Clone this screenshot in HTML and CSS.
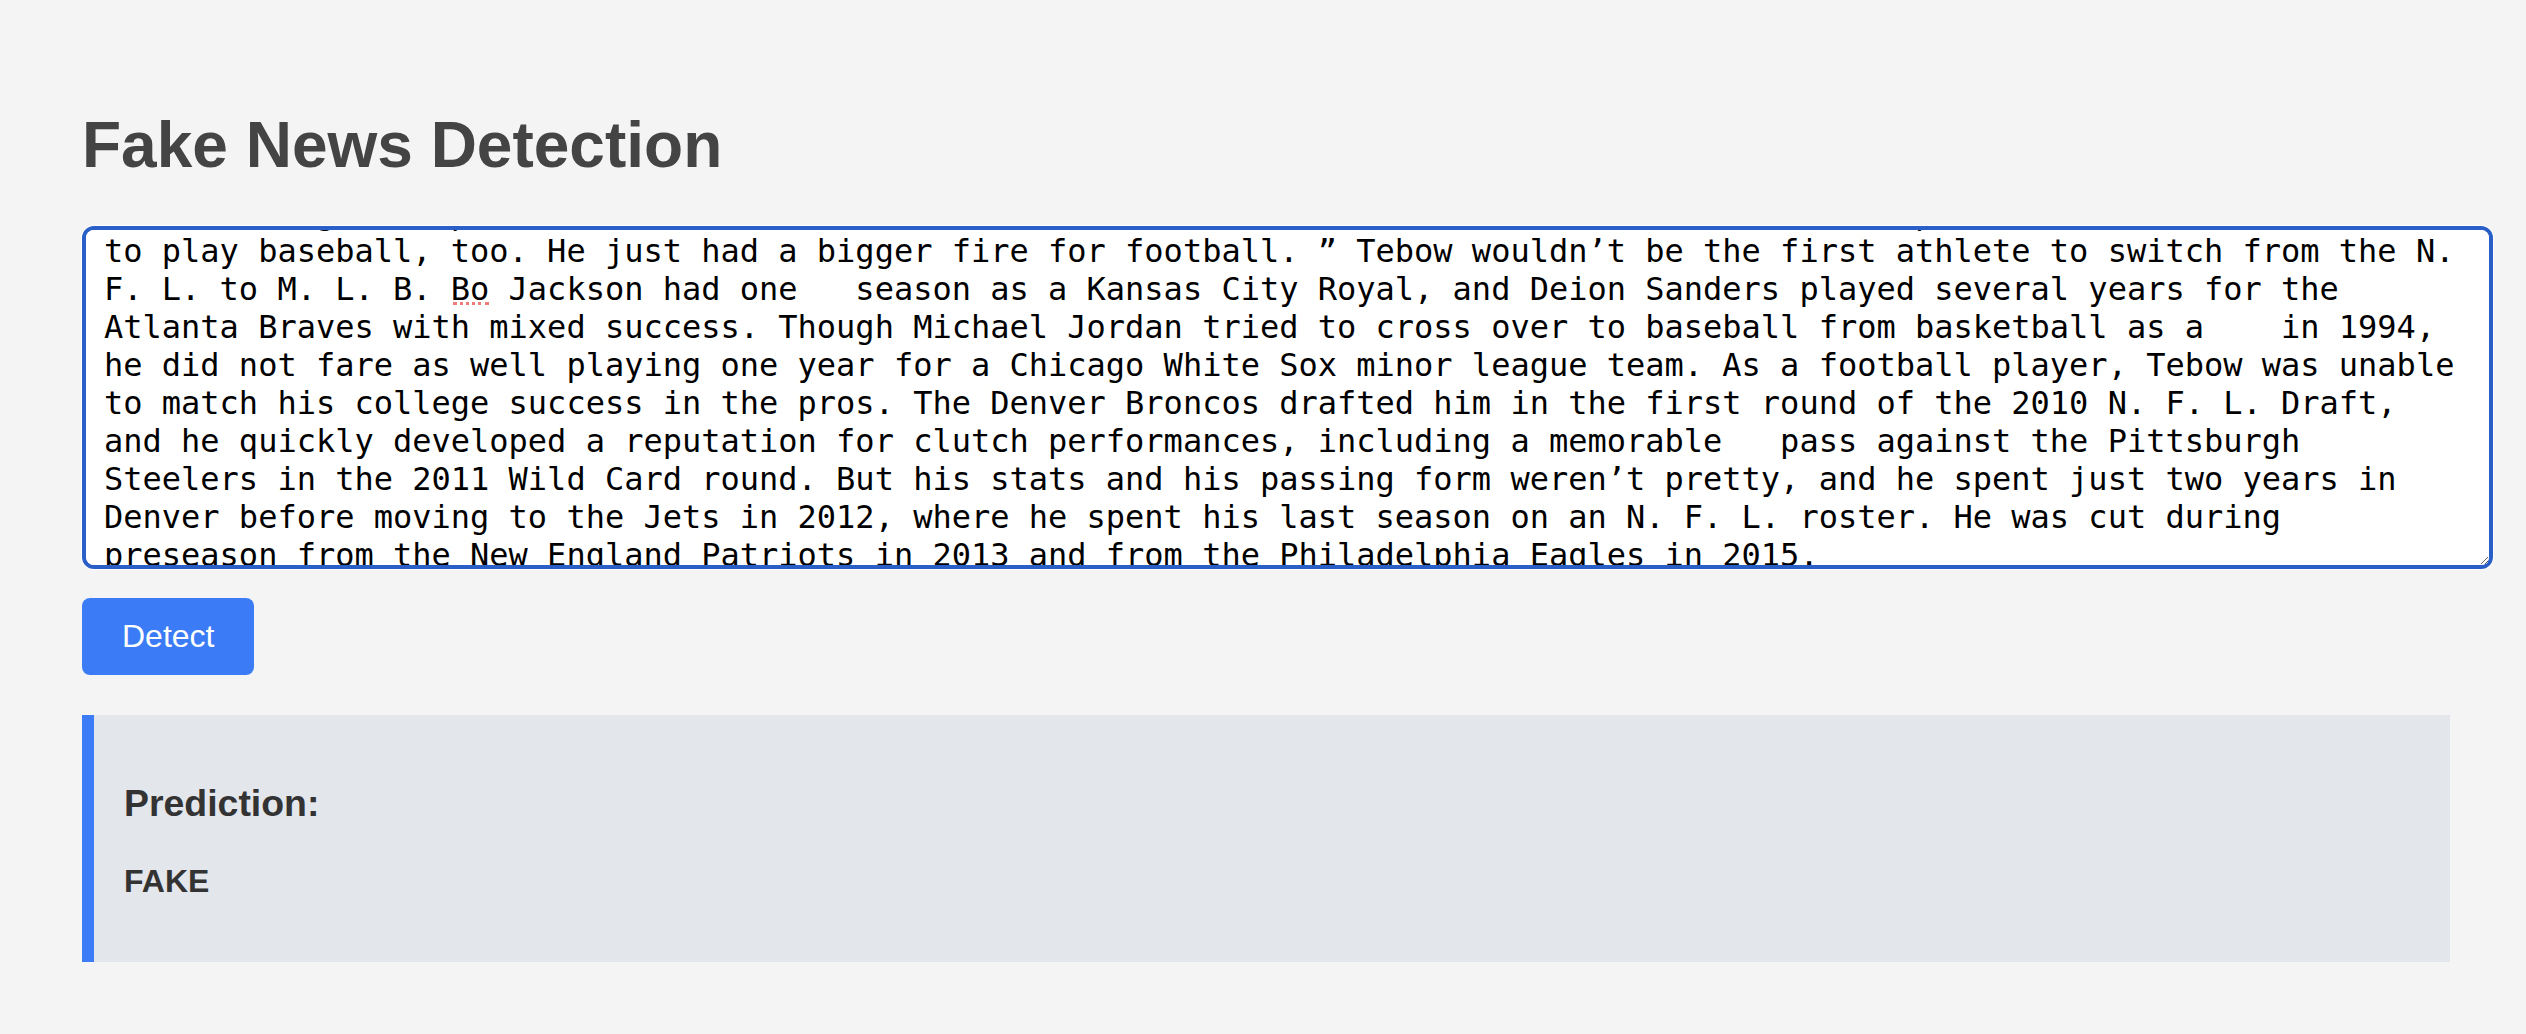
FILE: index.html
```html
<!DOCTYPE html>
<html lang="en">
<head>
<meta charset="utf-8">
<title>Fake News Detection</title>
<link rel="stylesheet" href="styles.css">
</head>
<body>
<main class="container">
  <h1 class="title">Fake News Detection</h1>
  <form class="form">
    <div class="editor">
      <textarea class="article" spellcheck="false">“He was so good a pitcher that the scouts were all after him while he was a senior, and the top clubs loved him. He wanted to play baseball, too. He just had a bigger fire for football. ” Tebow wouldn’t be the first athlete to switch from the N. F. L. to M. L. B. Bo Jackson had one   season as a Kansas City Royal, and Deion Sanders played several years for the Atlanta Braves with mixed success. Though Michael Jordan tried to cross over to baseball from basketball as a    in 1994, he did not fare as well playing one year for a Chicago White Sox minor league team. As a football player, Tebow was unable to match his college success in the pros. The Denver Broncos drafted him in the first round of the 2010 N. F. L. Draft, and he quickly developed a reputation for clutch performances, including a memorable   pass against the Pittsburgh Steelers in the 2011 Wild Card round. But his stats and his passing form weren’t pretty, and he spent just two years in Denver before moving to the Jets in 2012, where he spent his last season on an N. F. L. roster. He was cut during preseason from the New England Patriots in 2013 and from the Philadelphia Eagles in 2015.</textarea>
      <span class="spell-mark"></span>
    </div>
    <button type="button" class="detect-btn">Detect</button>
  </form>
  <section class="result">
    <h3 class="result-title">Prediction:</h3>
    <p class="result-label">FAKE</p>
  </section>
</main>
<script src="script.js"></script>
</body>
</html>
```

FILE: styles.css
```css
html, body {
  margin: 0;
}

body {
  background: #f4f4f4;
  font-family: "Liberation Sans", Arial, sans-serif;
  color: #333;
}

.container {
  padding: 108px 0 60px 82px;
}

.title {
  margin: 0 0 44px;
  font-size: 64px;
  line-height: 74px;
  font-weight: bold;
  color: #444;
}

.form {
  display: flex;
  flex-direction: column;
  align-items: flex-start;
  gap: 29px;
  margin: 0;
}

.editor {
  position: relative;
}

.article {
  display: block;
  box-sizing: border-box;
  width: 2411px;
  height: 343px;
  margin: 0;
  padding: 8px 25px 8px 18px;
  border: 4px solid #2a5fc8;
  border-radius: 12px;
  box-shadow: 0 0 0 1px #ffffff;
  background: #ffffff;
  color: #000;
  font-family: "DejaVu Sans Mono", "Liberation Mono", monospace;
  font-size: 32px;
  line-height: 38px;
  outline: none;
  scrollbar-width: none;
  resize: both;
}

.article::-webkit-scrollbar {
  display: none;
}

.spell-mark {
  position: absolute;
  left: 371px;
  top: 76px;
  width: 36px;
  height: 0;
  border-bottom: 3px dotted #ef7b7b;
  pointer-events: none;
}

.detect-btn {
  margin: 0;
  padding: 20px 40px;
  border: none;
  border-radius: 8px;
  background: #3b7cf6;
  color: #ffffff;
  font-family: "Liberation Sans", Arial, sans-serif;
  font-size: 32px;
  line-height: normal;
  cursor: pointer;
}

.result {
  box-sizing: border-box;
  width: 2368px;
  margin-top: 40px;
  padding: 30px;
  border-left: 12px solid #3b7cf6;
  background: #e3e6eb;
}

.result-title {
  margin: 37.44px 0;
  font-size: 37.44px;
  font-weight: bold;
  color: #333;
}

.result-label {
  margin: 32px 0;
  font-size: 32px;
  font-weight: bold;
  color: #333;
}
```

FILE: script.js
```js
document.querySelector('.article').scrollTop = 44;
```
